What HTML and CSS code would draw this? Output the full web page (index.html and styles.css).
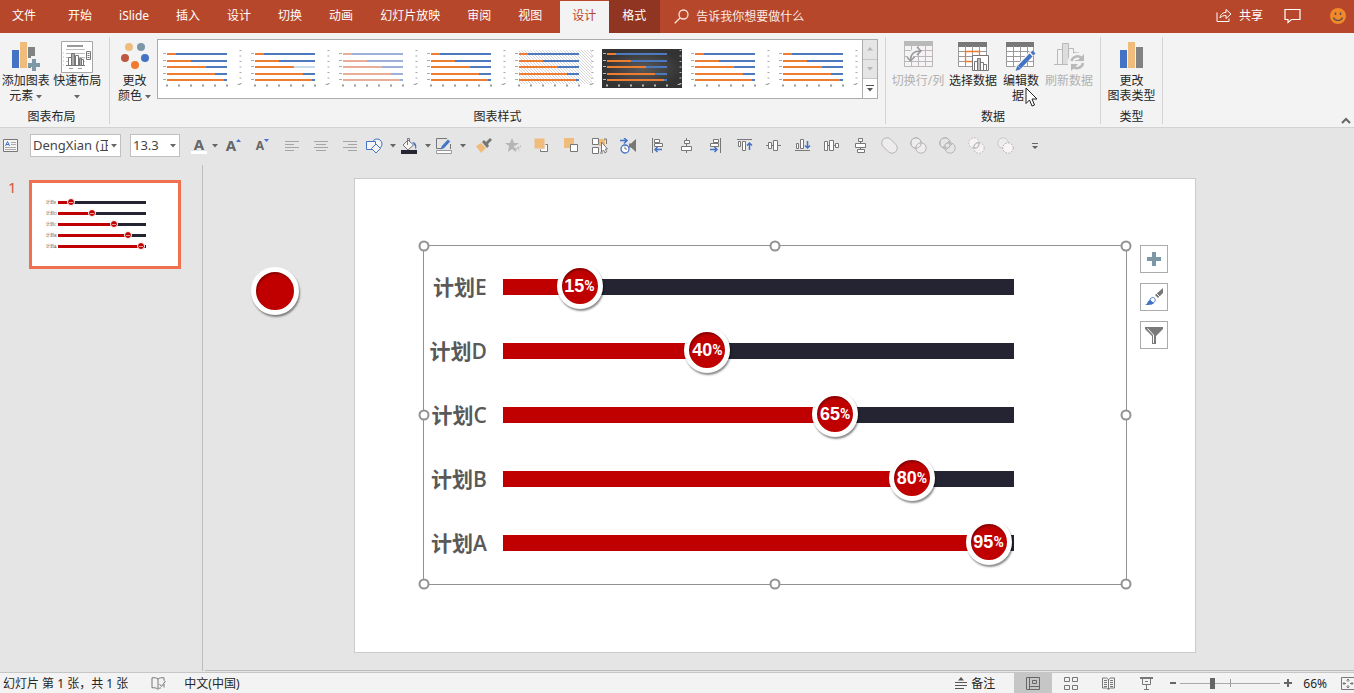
FILE: index.html
```
<!DOCTYPE html>
<html lang="zh-CN">
<head>
    <meta charset="UTF-8">
    <meta name="viewport" content="width=device-width, initial-scale=1.0">
    <title>PowerPoint</title>
    <link rel="stylesheet" href="styles.css">
</head>
<body>

    <!-- shared shapes -->
    <svg class="defs" width="0" height="0" aria-hidden="true">
        <defs>
            <pattern id="hatch" width="3" height="3" patternUnits="userSpaceOnUse">
                <path d="M0 0L3 3" stroke="#c4c4c4" stroke-width=".7"/>
            </pattern>
            <radialGradient id="dark"><stop offset="0" stop-color="#595959"/><stop offset="1" stop-color="#333"/></radialGradient>
            <symbol id="caret" viewBox="0 0 6 4"><path d="M0 0h6L3 3.5z" fill="#666"/></symbol>
            <symbol id="bars" viewBox="0 0 80 39">
                <g stroke-width="2" fill="none">
                    <path stroke="var(--b, #4d79bd)" d="M5 5h60M5 12h60M5 18h60M5 25h60M5 31h60"/>
                    <path stroke="var(--a, #ed7d31)" d="M5 5h9M5 12h24M5 18h39M5 25h48M5 31h57"/>
                </g>
                <path stroke="var(--t, #aaa)" d="M1 4.500h3M1 11.500h3M1 17.500h3M1 24.500h3M1 30.500h3"/>
                <path stroke="var(--t, #999)" stroke-width="2" stroke-dasharray="2 10" d="M4 36.500h62"/>
                <path stroke="var(--t, #aaa)" stroke-dasharray="1 4.500" stroke-width="2" d="M78.500 1v34"/>
                <path stroke="var(--t, #aaa)" d="M75.500 35.500h3"/>
            </symbol>
        </defs>
    </svg>

    <div class="app">
        <nav class="tabs">
            <a class="tab file" href="#">文件</a>
            <a class="tab" href="#">开始</a>
            <a class="tab" href="#">iSlide</a>
            <a class="tab" href="#">插入</a>
            <a class="tab" href="#">设计</a>
            <a class="tab" href="#">切换</a>
            <a class="tab" href="#">动画</a>
            <a class="tab" href="#">幻灯片放映</a>
            <a class="tab" href="#">审阅</a>
            <a class="tab" href="#">视图</a>
            <a class="tab active" href="#">设计</a>
            <a class="tab context" href="#">格式</a>
            <label class="tell-me">
                <svg width="15" height="15" viewBox="0 0 15 15" fill="none" stroke="#fbe3dc" stroke-width="1.300"><circle cx="9.500" cy="5.500" r="4.500"/><path d="M6.200 8.800L.7 14.300"/></svg>
                <input type="text" placeholder="告诉我你想要做什么">
            </label>
            <div class="account">
                <button class="share">
                    <svg width="16" height="15" viewBox="0 0 16 15" fill="none" stroke="#fff"><path d="M1 4.500v9h12v-3"/><path d="M4 10c.5-4 3-5.500 6-5.500V1.500l5 4.500-5 4.500V7.500C7.500 7.500 5.500 8 4 10z"/></svg>
                    共享
                </button>
                <button aria-label="批注"><svg width="17" height="16" viewBox="0 0 17 16" fill="none" stroke="#fff" stroke-width="1.200"><path d="M1 1.500h15v10H7.500L4 14.500v-3H1z"/></svg></button>
                <button aria-label="反馈"><svg width="16" height="16" viewBox="0 0 16 16"><circle cx="8" cy="8" r="8" fill="#f0892a"/><path d="M5.500 4.500v2.500M10.500 4.500v2.500" stroke="#5b4a55" stroke-width="1.500"/><path d="M3.500 9.500c1.500 4 7.500 4 9 0" fill="none" stroke="#5b4a55" stroke-width="1.200"/></svg></button>
            </div>
        </nav>

        <section class="ribbon">
            <div class="group layout">
                <div class="group-body">
                    <button class="big">
                        <svg width="30" height="30" viewBox="0 0 30 30"><path fill="#4472c4" d="M1 9h7v18H1z"/><path fill="#f0bc7c" d="M9 1h7v26H9z"/><path fill="#828282" d="M17 6h7v21h-7z"/><path fill="#f3f3f3" d="M16 17h4v-2h6v2h4v7h-4v6h-6v-5h-4z"/><path fill="#7c98a6" d="M21 18h4v4h4v4h-4v4h-4v-4h-4v-4h4z"/></svg>
                        <span>添加图表<br>元素 <svg class="dd"><use href="#caret"/></svg></span>
                    </button>
                    <button class="big">
                        <svg width="32" height="32" viewBox="0 0 32 32" fill="none" stroke="#999"><path fill="#fff" stroke="#a6a6a6" d="M.5.5h31v31H.5z"/><path stroke-width="2" d="M6 5h16"/><path stroke="#bbb" d="M5 8.500h19M5 12.500h19M5 16.500h19M5 20.500h19M2 12h1M2 16h1M2 20h1M2 24h1"/><g fill="#fff" stroke="#777"><path d="M7.500 16.500h3v8h-3zM14.500 14.500h3v10h-3zM20.500 18.500h2v6h-2z"/><path fill="#aaa" d="M10.500 12.500h3v12h-3zM18.500 17.500h2v7h-2z"/></g><path stroke="#777" d="M5 24.500h19M25.500 10.500h4v8h-4z"/><path stroke="#777" stroke-dasharray="1 1" stroke-width="2" d="M27.500 12v6"/><path d="M8 27.500h4M17 27.500h4"/></svg>
                        <span>快速布局<br><svg class="dd"><use href="#caret"/></svg></span>
                    </button>
                </div>
                <div class="group-name">图表布局</div>
            </div>

            <div class="group styles">
                <div class="group-body">
                    <button class="big">
                        <svg width="28" height="28" viewBox="0 0 28 28"><circle cx="8" cy="5" r="4" fill="#f0bc7c"/><circle cx="20" cy="5" r="4" fill="#7c98a6"/><circle cx="4" cy="16" r="4" fill="#bf5640"/><circle cx="24" cy="16" r="4" fill="#4472c4"/><circle cx="14" cy="23" r="4" fill="#f07a2d"/></svg>
                        <span>更改<br>颜色 <svg class="dd"><use href="#caret"/></svg></span>
                    </button>
                    <div class="gallery">
                        <div class="thumbs">
                            <button aria-label="样式 1"><svg viewBox="0 0 80 39"><use href="#bars"/></svg></button>
                            <button aria-label="样式 2"><svg viewBox="0 0 80 39"><use href="#bars"/><path d="M5 16h39M5 19.500h39" stroke="#fff"/><path d="M44 18h21" stroke="#c9dced" stroke-width="2"/></svg></button>
                            <button aria-label="样式 3" class="pale"><svg viewBox="0 0 80 39"><use href="#bars"/></svg></button>
                            <button aria-label="样式 4"><svg viewBox="0 0 80 39"><use href="#bars"/></svg></button>
                            <button aria-label="样式 5"><svg viewBox="0 0 80 39"><path fill="url(#hatch)" d="M5 1h73v34H5z"/><use href="#bars"/></svg></button>
                            <button aria-label="样式 6" class="night"><svg viewBox="0 0 80 39"><path fill="url(#dark)" d="M0 0h80v39H0z"/><use href="#bars"/></svg></button>
                            <button aria-label="样式 7"><svg viewBox="0 0 80 39"><use href="#bars"/></svg></button>
                            <button aria-label="样式 8"><svg viewBox="0 0 80 39"><use href="#bars"/></svg></button>
                        </div>
                        <div class="scroller">
                            <button aria-label="上一行" disabled><svg width="6" height="4" viewBox="0 0 6 4"><path d="M0 3.500h6L3 0z" fill="#b5b5b5"/></svg></button>
                            <button aria-label="下一行" disabled><svg width="6" height="4" viewBox="0 0 6 4"><path d="M0 0h6L3 3.500z" fill="#b5b5b5"/></svg></button>
                            <button aria-label="更多"><svg width="8" height="7" viewBox="0 0 8 7"><path d="M0 0h8v1H0zM1 3h6L4 6.500z" fill="#555"/></svg></button>
                        </div>
                    </div>
                </div>
                <div class="group-name">图表样式</div>
            </div>

            <div class="group data">
                <div class="group-body">
                    <button class="big" disabled>
                        <svg width="30" height="30" viewBox="0 0 30 30" fill="none" stroke="#b9b9b9"><path fill="#b9b9b9" stroke="none" d="M1 0h29v5H1z"/><path fill="#f6f2f5" d="M1.500 4.500h28v21h-28z"/><path d="M1 9.500h28M1 15.500h28M1 20.500h28M8.500 5v20M15.500 5v20M22.500 5v20"/><path stroke="#f3f3f3" stroke-width="5" d="M7 18c0-6 4-9 10-9"/><path stroke="#999" stroke-width="1.500" d="M7.500 19c0-6 4-9 10-9M14 6l4 4-4 4M4 16l3.500 4 4-4"/></svg>
                        <span>切换行/列</span>
                    </button>
                    <button class="big">
                        <svg width="32" height="30" viewBox="0 0 32 30" fill="none" stroke="#9a9a9a"><path fill="#fff" d="M1.500 4.500h28v21h-28z"/><path fill="#777" stroke="none" d="M1 1h29v5H1z"/><path d="M1 10.500h28M1 15.500h28M1 20.500h28M8.500 5v20M15.500 5v20M22.500 5v20"/><path stroke="#f07a2d" stroke-width="1.300" d="M15 20.500H8.500v-10h14V14"/><path fill="#fff" stroke="#777" d="M15.500 14.500h16v15h-16z"/><path stroke="#777" fill="#fff" d="M17.500 20.500h3v9h-3zM23.500 21.500h3v8h-3zM26.500 23.500h3v6h-3z"/><path stroke="#777" fill="#bbb" d="M20.500 17.500h3v12h-3z"/></svg>
                        <span>选择数据</span>
                    </button>
                    <button class="big edit">
                        <svg width="30" height="30" viewBox="0 0 30 30" fill="none" stroke="#9a9a9a"><path fill="#fff" d="M.5 4.500h27v21H.5z"/><path fill="#777" stroke="none" d="M0 1h28v5H0z"/><path d="M0 10.500h28M0 15.500h28M0 20.500h28M7.500 5v20M14.500 5v20M21.500 5v20"/><path stroke="#f3f3f3" stroke-width="6" d="M11 28L27 11"/><path stroke="#4472c4" stroke-width="4" d="M13.500 26L25 14M26 13l2-2"/><path fill="#4472c4" stroke="none" d="M9.500 30l2-5.500 3.500 3.500z"/></svg>
                        <span>编辑数<br>据&ensp;</span>
                        <svg class="pointer" width="14" height="20" viewBox="0 0 14 20"><path d="M1 1v15.500l3.500-3.500 2.500 6 2.500-1-2.500-6h5z" fill="#fff" stroke="#222"/></svg>
                    </button>
                    <button class="big" disabled>
                        <svg width="32" height="30" viewBox="0 0 32 30" fill="none" stroke="#b9b9b9"><path d="M1 23.500h16M4.500 8.500h5v15h-5zM15.500 7.500h5v14h-5zM20.500 11.500h5v8h-5z"/><path fill="#ddd" d="M9.500 2.500h6v21h-6z"/><path stroke="#f3f3f3" stroke-width="7" d="M18 21a6 6 0 1112 0 6 6 0 01-12 0"/><path stroke-width="2.500" d="M18.500 20a6 6 0 0110-3M30 22a6 6 0 01-10 3.500"/><path fill="#b9b9b9" stroke="none" d="M31 13v7h-7zM18 30v-7h7z"/></svg>
                        <span>刷新数据</span>
                    </button>
                </div>
                <div class="group-name">数据</div>
            </div>

            <div class="group type">
                <div class="group-body">
                    <button class="big">
                        <svg width="24" height="30" viewBox="0 0 24 30"><path fill="#4472c4" d="M0 9h7v18H0z"/><path fill="#f0bc7c" d="M8 1h7v26H8z"/><path fill="#828282" d="M16 6h7v21h-7z"/></svg>
                        <span>更改<br>图表类型</span>
                    </button>
                </div>
                <div class="group-name">类型</div>
            </div>
            <button class="collapse" aria-label="折叠功能区"><svg width="10" height="7" viewBox="0 0 10 7" fill="none" stroke="#666" stroke-width="2"><path d="M1 6l4-4 4 4"/></svg></button>
        </section>

        <div class="quickbar">
            <button class="qb first" aria-label="文本框"><svg width="16" height="14" viewBox="0 0 16 14" fill="none" stroke="#777"><path fill="#f5f5f5" d="M.5.500h14v12H.5z"/><path d="M8 3.500h5M8 5.500h5M2 8.500h11M2 10.500h11" stroke="#aaa"/><path d="M2.500 7L4.500 2.500 6.500 7M3 5.500h3" stroke="#4472c4"/></svg></button>
            <span class="combo font"><select aria-label="字体"><option>DengXian (正文)</option></select><svg class="dd"><use href="#caret"/></svg></span>
            <span class="combo size"><select aria-label="字号"><option>13.3</option></select><svg class="dd"><use href="#caret"/></svg></span>
            <button class="split color" aria-label="字体颜色"><span class="letter">A</span><svg class="dd"><use href="#caret"/></svg></button>
            <button class="qb" aria-label="增大字号"><span class="letter">A</span><svg class="sup" width="5" height="3" viewBox="0 0 5 3"><path d="M0 3h5L2.500 0z" fill="#4472c4"/></svg></button>
            <button class="qb" aria-label="减小字号"><span class="letter small">A</span><svg class="sup" width="5" height="3" viewBox="0 0 5 3"><path d="M0 0h5L2.500 3z" fill="#4472c4"/></svg></button>
            <button class="qb" aria-label="左对齐"><svg width="16" height="12" viewBox="0 0 16 12" stroke="#a5a5a5"><path d="M1 1.500h14M1 4.500h9M1 7.500h14M1 10.500h9"/></svg></button>
            <button class="qb" aria-label="居中"><svg width="16" height="12" viewBox="0 0 16 12" stroke="#a5a5a5"><path d="M1 1.500h14M3 4.500h10M1 7.500h14M3 10.500h10"/></svg></button>
            <button class="qb" aria-label="右对齐"><svg width="16" height="12" viewBox="0 0 16 12" stroke="#a5a5a5"><path d="M1 1.500h14M6 4.500h9M1 7.500h14M6 10.500h9"/></svg></button>
            <button class="split" aria-label="形状"><svg width="17" height="16" viewBox="0 0 17 16" fill="#f5f5f5" stroke="#4472c4"><circle cx="11" cy="6" r="5"/><path d="M.5 3.500h9v8h-9z"/><path d="M10 6l4.500 4.500L10 15l-4.500-4.500z"/></svg><svg class="dd"><use href="#caret"/></svg></button>
            <button class="split" aria-label="形状填充"><svg width="17" height="16" viewBox="0 0 17 16"><path fill="#f5f5f5" stroke="#777" d="M7 2l5.500 5L7 12 2 7z"/><path fill="none" stroke="#777" d="M6.500 7V.5h2V4"/><path d="M11 4c4 0 5 3 4 8-1-3-1-5-4-8z" fill="#4472c4"/><path d="M0 12h16v4H0z" fill="#252432"/></svg><svg class="dd"><use href="#caret"/></svg></button>
            <button class="split" aria-label="形状轮廓"><svg width="17" height="16" viewBox="0 0 17 16" fill="none"><path d="M11 .5H.5v10H5M14.500 6v5" stroke="#777"/><path d="M7 9l6-6.500" stroke="#4472c4" stroke-width="3"/><path d="M4.500 11.500L6 7.500 8.500 10z" fill="#4472c4"/><path d="M.5 12.500h15v3H.5z" fill="#fff" stroke="#999"/></svg><svg class="dd"><use href="#caret"/></svg></button>
            <button class="qb" aria-label="格式刷"><svg width="16" height="15" viewBox="0 0 16 15"><path fill="#f0bc7c" d="M0 8l5-3 5 5-5 5z"/><path fill="#777" d="M6 4l2-2 2 2 4-4 2 2-4 4 1 2-2 2z"/></svg></button>
            <button class="qb" aria-label="动画"><svg width="16" height="15" viewBox="0 0 16 15"><path fill="#b5b5b5" d="M7 0l2 5h5l-4 3 1 6-4-3-4 3 1-6-4-3h5z"/><path stroke="#ddd" stroke-width="2" d="M9 8l6 5"/><path stroke="#bbb" stroke-width="2" stroke-dasharray="2 1" d="M10 12l6-4"/></svg></button>
            <button class="qb" aria-label="上移一层"><svg width="16" height="15" viewBox="0 0 16 15"><path fill="#fff" stroke="#777" d="M6.500 6.500h7v7h-7z"/><path fill="#f0bc7c" stroke="#e5e5e5" d="M0 0h11v11H0z"/></svg></button>
            <button class="qb" aria-label="下移一层"><svg width="16" height="15" viewBox="0 0 16 15"><path fill="#f0bc7c" d="M1 0h10v10H1z"/><path fill="#fff" stroke="#777" d="M7.500 6.500h7v7h-7z"/></svg></button>
            <button class="qb" aria-label="选择对象"><svg width="17" height="16" viewBox="0 0 17 16"><path fill="#f0bc7c" d="M8 1h6v7H8z"/><path fill="#fff" stroke="#777" d="M1.500.500h6v6h-6zM1.500 9.500h6v6h-6z"/><path d="M13 1h2.500v5M9 15h3" stroke="#777" fill="none"/><path fill="#fff" stroke="#777" d="M10.500 4v10l2-2 1.500 3 1.500-1-1-3h2z"/></svg></button>
            <button class="qb" aria-label="计时"><svg width="17" height="16" viewBox="0 0 17 16" fill="none"><path d="M0 2.500h6M4 0l3 2.500-3 3" stroke="#4472c4" stroke-width="1.500"/><circle cx="5" cy="11" r="4" fill="#fff" stroke="#4472c4" stroke-width="1.300"/><path d="M5 8.500V11h2" stroke="#777"/><path fill="#777" d="M16 1v13l-5-4.500H9v-4h2z"/></svg></button>
            <button class="qb" aria-label="对齐到左侧"><svg width="16" height="15" viewBox="0 0 16 15" fill="none" stroke="#777"><path d="M2.500 0v15"/><path fill="#fff" d="M4.500 1.500h5v3h-5zM4.500 5.500h8v3h-8z"/><path d="M12 11.500H5M7.500 9L5 11.500 7.500 14" stroke="#4472c4" stroke-width="1.500"/></svg></button>
            <button class="qb" aria-label="水平居中"><svg width="16" height="15" viewBox="0 0 16 15" fill="#fff" stroke="#777"><path d="M7.500 0v15"/><path d="M5.500 2.500h5v3h-5zM2.500 8.500h10v4h-10z"/></svg></button>
            <button class="qb" aria-label="对齐到右侧"><svg width="16" height="15" viewBox="0 0 16 15" fill="none" stroke="#777"><path d="M12.500 0v15"/><path fill="#fff" d="M5.500 1.500h5v3h-5zM2.500 5.500h8v3h-8z"/><path d="M2 11.500h7M6.500 9L9 11.500 6.500 14" stroke="#4472c4" stroke-width="1.500"/></svg></button>
            <button class="qb" aria-label="顶端对齐"><svg width="16" height="15" viewBox="0 0 16 15" fill="none" stroke="#777"><path d="M0 1.500h15"/><path fill="#fff" d="M1.500 3.500h2v5h-2zM5.500 3.500h3v9h-3z"/><path d="M12.500 12V5M10 7.500L12.500 5 15 7.500" stroke="#4472c4" stroke-width="1.500"/></svg></button>
            <button class="qb" aria-label="垂直居中"><svg width="16" height="15" viewBox="0 0 16 15" fill="#fff" stroke="#777"><path d="M0 7.500h15"/><path d="M2.500 4.500h3v6h-3zM7.500 2.500h4v10h-4z"/></svg></button>
            <button class="qb" aria-label="底端对齐"><svg width="16" height="15" viewBox="0 0 16 15" fill="none" stroke="#777"><path d="M0 12.500h15"/><path fill="#fff" d="M1.500 5.500h2v5h-2zM5.500 1.500h3v9h-3z"/><path d="M12.500 3v7M10 7.500l2.500 2.500L15 7.500" stroke="#4472c4" stroke-width="1.500"/></svg></button>
            <button class="qb" aria-label="横向分布"><svg width="16" height="15" viewBox="0 0 16 15" fill="#fff" stroke="#777"><path d="M3 7.500h10"/><path d="M.5 3.500h3v9h-3zM5.500 2.500h4v10h-4zM11.500 5.500h3v4h-3z"/></svg></button>
            <button class="qb" aria-label="纵向分布"><svg width="16" height="16" viewBox="0 0 16 16" fill="#fff" stroke="#777"><path d="M7.500 3v9"/><path d="M5.500.500h4v3h-4zM2.500 5.500h10v4h-10zM4.500 11.500h7v3h-7z"/></svg></button>
            <button class="qb" aria-label="结合" disabled><svg width="17" height="17" viewBox="0 0 17 17"><path fill="#efecee" stroke="#b5b5b5" d="M2.300 9.700A5.200 5.200 0 019.700 2.300l5 5A5.200 5.200 0 017.300 14.700z"/></svg></button>
            <button class="qb" aria-label="组合" disabled><svg width="17" height="17" viewBox="0 0 17 17" fill="#efecee" stroke="#b5b5b5"><circle cx="6" cy="6" r="5.200"/><circle cx="11" cy="11" r="5.200"/><circle cx="6" cy="6" r="5.200" fill="none"/></svg></button>
            <button class="qb" aria-label="拆分" disabled><svg width="17" height="17" viewBox="0 0 17 17" fill="#e5e5e5" stroke="#b5b5b5"><circle cx="6" cy="6" r="5.200"/><circle cx="11" cy="11" r="5.200"/><circle cx="6" cy="6" r="5.200" fill="none"/><circle cx="8.500" cy="8.500" r="2.500"/><path d="M4 10l6-6M7 13l6-6"/></svg></button>
            <button class="qb" aria-label="相交" disabled><svg width="17" height="17" viewBox="0 0 17 17" fill="#f5f1f4" stroke="#b5b5b5"><g stroke-dasharray="1.500 1.500"><circle cx="6" cy="6" r="5.200"/><circle cx="11" cy="11" r="5.200"/></g><path stroke="#a5a5a5" d="M6 11c-.5-3 2-6 5-5 .5 3-2 6-5 5z"/></svg></button>
            <button class="qb" aria-label="剪除" disabled><svg width="17" height="17" viewBox="0 0 17 17" fill="#efecee"><circle cx="6" cy="6" r="5.200" stroke="#c9c9c9"/><circle cx="11" cy="11" r="5.200" fill="#f8f3f7" stroke="#a5a5a5" stroke-dasharray="1.500 1.500"/></svg></button>
            <button class="qb more" aria-label="自定义"><svg width="6" height="6" viewBox="0 0 6 6"><path d="M0 0h6v1H0zM0 3h6L3 6z" fill="#666"/></svg></button>
        </div>

        <main class="workspace">
            <aside class="outline">
                <span class="number">1</span>
                <button class="slide-thumb" aria-label="幻灯片 1">
                    <svg viewBox="0 0 146 83">
                        <g stroke-width="3">
                            <path stroke="#252432" d="M26 19.500h88M26 30.500h88M26 41.500h88M26 52.500h88M26 63.500h88"/>
                            <path stroke="#c00000" d="M26 19.500h13M26 30.500h35M26 41.500h57M26 52.500h70M26 63.500h84"/>
                        </g>
                        <g fill="#c00000" stroke="#fff">
                            <circle cx="39" cy="19" r="3.500"/><circle cx="60" cy="30" r="3.500"/><circle cx="82" cy="41" r="3.500"/><circle cx="96" cy="52" r="3.500"/><circle cx="109" cy="63" r="3.500"/>
                        </g>
                        <path stroke="#fff" stroke-opacity=".6" d="M37 19.500h4M58 30.500h4M80 41.500h4M94 52.500h4M107 63.500h4"/>
                        <g class="tiny"><text x="14" y="21">计划E</text><text x="14" y="32">计划D</text><text x="14" y="43">计划C</text><text x="14" y="54">计划B</text><text x="14" y="65">计划A</text></g>
                    </svg>
                </button>
            </aside>
            <div class="canvas">
                <span class="knob spare"></span>
                <div class="slide">
                    <div class="chart">
                        <div class="row"><span class="name">计划E</span><div class="track"><div class="fill" style="width:15%"></div><span class="knob" style="left:15%">15<small>%</small></span></div></div>
                        <div class="row"><span class="name">计划D</span><div class="track"><div class="fill" style="width:40%"></div><span class="knob" style="left:40%">40<small>%</small></span></div></div>
                        <div class="row"><span class="name">计划C</span><div class="track"><div class="fill" style="width:65%"></div><span class="knob" style="left:65%">65<small>%</small></span></div></div>
                        <div class="row"><span class="name">计划B</span><div class="track"><div class="fill" style="width:80%"></div><span class="knob" style="left:80%">80<small>%</small></span></div></div>
                        <div class="row"><span class="name">计划A</span><div class="track"><div class="fill" style="width:95%"></div><span class="knob" style="left:95%">95<small>%</small></span></div></div>

                        <i class="handle top left"></i><i class="handle top mid"></i><i class="handle top right"></i>
                        <i class="handle center left"></i><i class="handle center right"></i>
                        <i class="handle bottom left"></i><i class="handle bottom mid"></i><i class="handle bottom right"></i>

                        <div class="chart-tools">
                            <button aria-label="图表元素"><svg width="14" height="14" viewBox="0 0 14 14"><path fill="#7c98a6" d="M5 0h4v5h5v4H9v5H5V9H0V5h5z"/></svg></button>
                            <button aria-label="图表样式"><svg width="18" height="18" viewBox="0 0 18 18"><path fill="#777" d="M18 0v5l-5 5-3-3z"/><path stroke="#fff" d="M11 5l4 4"/><path fill="#fff" stroke="#4472c4" d="M5 11c2-2 4-2 5 0s-1 4-4 5z"/><path fill="#4472c4" d="M0 17c3-1 2-4 5-5l4 3c-2 2-5 2-9 2z"/></svg></button>
                            <button aria-label="图表筛选器"><svg width="18" height="17" viewBox="0 0 18 17"><path fill="#7a7a7a" d="M0 0h18v2l-7 7v8H7V9L0 2z"/><path d="M2.500 1.500L8.500 8v8" fill="none" stroke="#fff"/></svg></button>
                        </div>
                    </div>
                </div>
            </div>
        </main>

        <footer class="status">
            <span class="pages">幻灯片 第 1 张，共 1 张</span>
            <button aria-label="拼写检查"><svg width="15" height="13" viewBox="0 0 15 13" fill="none" stroke="#777"><path d="M7 11.500V2C5.500.8 3 .5 1 .8v10c2-.3 4.500 0 6 1.500 1-1 2-1.300 3-1.400M7 2c1.500-1.200 3.500-1.500 6-1.200v3M8.500 7l2 2.500 4-5.500M13 7v3.500"/></svg></button>
            <button class="lang">中文(中国)</button>
            <div class="status-right">
                <button class="notes"><svg width="12" height="12" viewBox="0 0 12 12"><path fill="#555" d="M6 0l3 3.500H3zM0 5h12v1H0zM0 8h12v1H0zM0 11h9v1H0z"/></svg>备注</button>
                <button class="view on" aria-label="普通视图"><svg width="15" height="13" viewBox="0 0 15 13" fill="none" stroke="#666"><path d="M.5.500h13v12H.5zM3.500.500v12M3.500 9.500h10M6.500 3.500h4v3h-4z"/></svg></button>
                <button class="view" aria-label="幻灯片浏览"><svg width="15" height="13" viewBox="0 0 15 13" fill="none" stroke="#777"><path d="M.5.500h5v4h-5zM8.500.500h5v4h-5zM.5 8.500h5v4h-5zM8.500 8.500h5v4h-5z"/></svg></button>
                <button class="view" aria-label="阅读视图"><svg width="15" height="13" viewBox="0 0 15 13" fill="none" stroke="#777"><path d="M.5 1h4l2 1.500L8.500 1h4v10h-4l-2 1.500-2-1.500h-4zM6.500 2v10M2 3.500h3M2 5.500h3M2 7.500h3M2 9.500h3M8 3.500h3M8 5.500h3M8 7.500h3M8 9.500h3"/></svg></button>
                <button class="view" aria-label="幻灯片放映"><svg width="14" height="13" viewBox="0 0 14 13" fill="none" stroke="#777"><path d="M0 1h13" stroke-width="2"/><path d="M2.500 2v5.500h8V2M6.500 8v4M4 12.500h5M5 4.500h3"/></svg></button>
                <button class="zoom" aria-label="缩小"><svg width="6" height="8" viewBox="0 0 6 8"><path d="M0 3h6v2H0z" fill="#666"/></svg></button>
                <input class="zoom-range" type="range" min="0" max="100" value="31" aria-label="显示比例">
                <button class="zoom" aria-label="放大"><svg width="8" height="8" viewBox="0 0 8 8"><path d="M3 0h2v3h3v2H5v3H3V5H0V3h3z" fill="#666"/></svg></button>
                <button class="percent">66%</button>
                <button class="fit" aria-label="适应窗口"><svg width="14" height="13" viewBox="0 0 14 13" fill="none" stroke="#777"><path d="M.5.500h13v12H.5z"/><path d="M7 2v3M5.500 3.500L7 2l1.500 1.500M7 11V8M5.500 9.500L7 11l1.500-1.500M2 6.500h3M3.500 5L2 6.500 3.500 8M12 6.500H9M10.500 5L12 6.500 10.500 8"/></svg></button>
            </div>
        </footer>
    </div>

</body>
</html>
```
FILE: styles.css
```
* {
    box-sizing: border-box;
}

body {
    margin: 0;
    font-family: "Noto Sans", "Noto Sans CJK SC", sans-serif;
    font-size: 12px;
    line-height: 15px;
    color: #262626;
    background: #e5e5e5;
    overflow: hidden;
}

button, select, input {
    font: inherit;
    color: inherit;
    padding: 0;
    border: 0;
    background: none;
}

svg {
    flex: none;
}

.defs {
    position: absolute;
}

.app {
    display: flex;
    flex-direction: column;
    height: 100vh;
}

.dd {
    width: 6px;
    height: 4px;
    vertical-align: middle;
}

/* Tabs */
.tabs {
    display: flex;
    height: 33px;
    background: #b7472a;
    color: #fff;
}

.tab {
    padding: 8px 14px 0 13px;
    color: #fff;
    text-decoration: none;
    white-space: nowrap;
}

.tab.file {
    padding: 8px 19px 0 12px;
}

.tab.active {
    margin: 1px 0 0 4px;
    padding: 7px 13px 0 12px;
    background: #f3f3f3;
    color: #b7472a;
}

.tab.context {
    background: #8f3522;
}

.tell-me {
    display: flex;
    align-items: center;
    gap: 7px;
    padding-left: 14px;
}

.tell-me input {
    width: 160px;
    outline: none;
}

.tell-me input::placeholder {
    color: #fbe9e4;
    opacity: 1;
}

.account {
    display: flex;
    align-items: center;
    gap: 21px;
    margin-left: auto;
    padding: 0 8px 2px 0;
}

.account svg {
    display: block;
}

.account button:last-child {
    margin-left: 8px;
}

.share {
    display: flex;
    align-items: center;
    gap: 7px;
}

/* Ribbon */
.ribbon {
    display: flex;
    height: 95px;
    padding: 4px 0 3px;
    background: #f3f3f3;
    border-bottom: 1px solid #d2d2d2;
}

.group {
    display: flex;
    flex-direction: column;
    justify-content: space-between;
    border-right: 1px solid #d4d4d4;
}

.group-body {
    display: flex;
}

.group-name {
    text-align: center;
}

.group.layout {
    width: 110px;
    padding-right: 6px;
}

.group.styles {
    flex: 1;
    max-width: 776px;
}

.styles .group-body {
    padding-right: 7px;
}

.group.data {
    width: 215px;
}

.data .group-body {
    padding-left: 3px;
}

.group.type {
    width: 62px;
}

.group.type .big {
    width: 100%;
}

.big {
    position: relative;
    display: flex;
    flex-direction: column;
    align-items: center;
    width: 52px;
    padding-top: 4px;
    white-space: nowrap;
}

.big > svg {
    height: 32px;
}

.big > svg:not([height="32"]) {
    height: 30px;
    margin-bottom: 2px;
}

.big:disabled {
    color: #b1b1b1;
}

.styles .big {
    width: 47px;
    padding-left: 2px;
}

.data .big:first-child {
    width: 58px;
}

.data .edit {
    width: 44px;
}

.big .pointer {
    position: absolute;
    left: 26px;
    top: 50px;
}

.big > svg.pointer[height="20"] {
    height: 20px;
    margin: 0;
}

.gallery {
    display: flex;
    flex: 1;
    height: 60px;
    margin-top: 2px;
    border: 1px solid #ababab;
    background: #fff;
    overflow: hidden;
}

.thumbs {
    display: flex;
    flex: 1;
    align-items: center;
    gap: 8px;
    padding: 0 0 1px 4px;
}

.thumbs button,
.thumbs svg {
    display: block;
    width: 80px;
    height: 39px;
}

.pale {
    --a: #e9ae97;
    --b: #9db1d8;
}

.night {
    --t: #bbb;
}

.scroller {
    display: flex;
    flex-direction: column;
    width: 15px;
    border-left: 1px solid #ababab;
}

.scroller button {
    display: flex;
    flex: 1;
    align-items: center;
    justify-content: center;
}

.scroller button:disabled {
    background: #e5e5e5;
    border-bottom: 1px solid #c6c6c6;
}

.collapse {
    align-self: flex-end;
    margin-left: auto;
    padding-right: 3px;
    line-height: 7px;
}

/* Quick access toolbar */
.quickbar {
    display: flex;
    align-items: center;
    height: 37px;
    padding-bottom: 2px;
    background: #e5e5e5;
}

.qb {
    position: relative;
    display: flex;
    align-items: center;
    justify-content: center;
    width: 29px;
    height: 24px;
}

.qb.first {
    width: 30px;
    justify-content: flex-start;
    padding-left: 3px;
}

.combo {
    position: relative;
    margin-right: 9px;
}

.combo select {
    appearance: none;
    width: 100%;
    height: 23px;
    padding-left: 2px;
    border: 1px solid #c0c0c0;
    background: #fff;
    color: #444;
    font-size: 13px;
}

.combo.font {
    width: 91px;
}

.combo.font select {
    padding-right: 12px;
}

.combo.size {
    width: 50px;
}

.combo .dd {
    position: absolute;
    right: 4px;
    top: 10px;
}

.letter {
    color: #666;
    font-weight: 700;
    font-size: 15px;
}

.letter.small {
    font-size: 12px;
}

.sup {
    align-self: flex-start;
    margin-top: 5px;
}

.split {
    display: flex;
    align-items: center;
    gap: 7px;
    width: 35px;
    height: 24px;
    padding-left: 2px;
}

.split.color {
    gap: 5px;
    width: 30px;
}

.color .letter {
    width: 16px;
    border-bottom: 3px solid #fff;
    line-height: 14px;
}

/* Workspace */
.workspace {
    display: flex;
    flex: 1;
    min-height: 0;
    padding-bottom: 1px;
}

.outline {
    display: flex;
    align-items: flex-start;
    gap: 14px;
    width: 203px;
    padding: 15px 0 0 8px;
    border-right: 1px solid #bdbdbd;
}

.number {
    width: 7px;
    color: #d2583c;
    font-size: 15px;
}

.slide-thumb {
    width: 152px;
    border: 3px solid #f0714f;
    background: #fff;
}

.slide-thumb svg {
    display: block;
    width: 100%;
}

.tiny {
    font-size: 4px;
    fill: #595959;
}

.canvas {
    position: relative;
    display: flex;
    flex: 1;
    align-items: flex-start;
    justify-content: center;
    margin-left: 2px;
    padding: 13px 9px 0 0;
    border-bottom: 1px solid #bdbdbd;
}

.slide {
    position: relative;
    width: 73.9%;
    aspect-ratio: 842 / 475;
    border: 1px solid #cbcbcb;
    background: #fff;
}

.chart {
    position: absolute;
    left: 8.1%;
    top: 14%;
    width: 83.8%;
    height: 71.8%;
    display: grid;
    grid-auto-rows: 1fr;
    padding: 9px 112px 9px 0;
    border: 1px solid #929292;
}

.row {
    display: grid;
    grid-template-columns: 63px 1fr;
    gap: 16px;
    align-items: center;
}

.name {
    color: #595959;
    font-family: "Open Sans", "Noto Sans CJK SC", sans-serif;
    font-size: 21px;
    font-weight: 600;
    line-height: 24px;
    text-align: right;
    white-space: nowrap;
}

.track {
    position: relative;
    height: 16px;
    background: #252432;
}

.fill {
    height: 100%;
    background: #c00000;
}

.knob {
    position: absolute;
    top: 7px;
    display: flex;
    align-items: center;
    justify-content: center;
    width: 46px;
    height: 46px;
    border: 5px solid #fff;
    border-radius: 50%;
    background: #c00000;
    box-shadow: 1px 2px 2px rgba(0, 0, 0, 0.45), inset 1px 2px 2px rgba(0, 0, 0, 0.3);
    color: #fff;
    font-family: "Liberation Sans", sans-serif;
    font-size: 18px;
    font-weight: 700;
    transform: translate(-50%, -50%);
}

.knob small {
    font-family: Roboto, sans-serif;
    font-size: 14px;
}

.knob.spare {
    left: 70px;
    top: 126px;
    width: 48px;
    height: 48px;
}

.handle {
    position: absolute;
    width: 11px;
    height: 11px;
    border: 2px solid #929292;
    border-radius: 50%;
    background: #fff;
    transform: translate(-50%, -50%);
}

.handle.top { top: 0; }
.handle.center { top: 50%; }
.handle.bottom { top: 100%; }
.handle.left { left: 0; }
.handle.mid { left: 50%; }
.handle.right { left: 100%; }

.chart-tools {
    position: absolute;
    left: calc(100% + 14px);
    top: -1px;
    display: grid;
    gap: 10px;
}

.chart-tools button {
    display: grid;
    place-items: center;
    width: 28px;
    height: 28px;
    border: 1px solid #ababab;
    background: #fff;
}

/* Status bar */
.status {
    display: flex;
    align-items: center;
    height: 21px;
    padding-left: 3px;
    border-top: 1px solid #c6c6c6;
    background: #f3f3f3;
}

.status svg {
    display: block;
}

.pages {
    margin-right: 23px;
}

.lang {
    margin-left: 18px;
}

.status-right {
    display: flex;
    align-items: center;
    height: 100%;
    margin-left: auto;
}

.notes {
    display: flex;
    align-items: center;
    gap: 4px;
    margin-right: 19px;
}

.view {
    display: grid;
    place-items: center;
    width: 38px;
    height: 100%;
}

.view.on {
    background: #c6c6c6;
}

.zoom {
    margin-left: 4px;
}

.zoom-range {
    appearance: none;
    width: 100px;
    height: 12px;
    margin: 0 0 0 4px;
    background: linear-gradient(#999, #999) 50px 2px / 1px 8px no-repeat,
        linear-gradient(#aaa, #aaa) 0 6px / 100% 1px no-repeat;
}

.zoom-range::-webkit-slider-thumb {
    appearance: none;
    width: 5px;
    height: 11px;
    background: #666;
}

.percent {
    margin: 0 14px 0 11px;
}

.fit {
    width: 13px;
    overflow: hidden;
}
```
